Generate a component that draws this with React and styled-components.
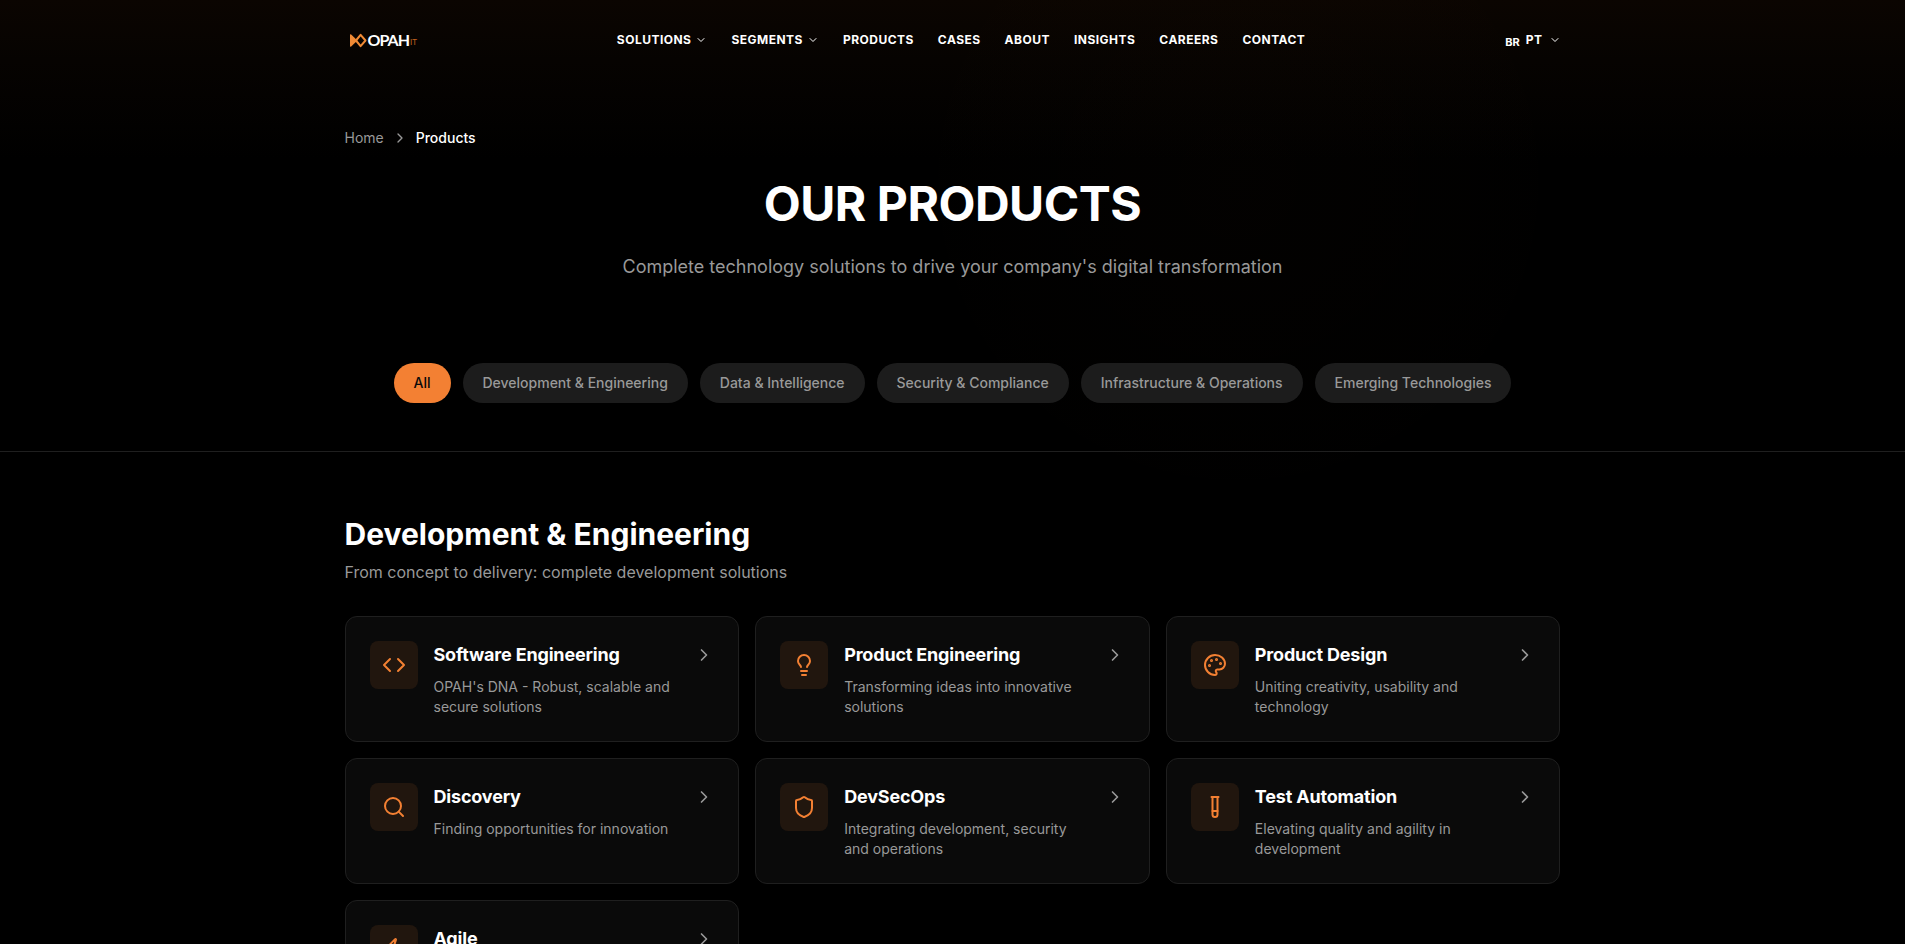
import React, { useState } from 'react';
import styled, { createGlobalStyle } from 'styled-components';
import { ChevronDown, ChevronRight, Code, Search, TestTube, Zap } from 'lucide-react';

const GlobalStyle = createGlobalStyle`
    * {
        box-sizing: border-box;
    }
    body {
        margin: 0;
        background: #000;
        color: #fff;
        font-family: Inter, sans-serif;
        -webkit-font-smoothing: antialiased;
    }
    h1, h2, h3, p, ul, ol {
        margin: 0;
        padding: 0;
    }
    ul, ol {
        list-style: none;
    }
    a {
        color: inherit;
        text-decoration: none;
    }
    button {
        border: 0;
        padding: 0;
        background: none;
        color: inherit;
        font: inherit;
        cursor: pointer;
    }
`

const Page = styled.div`
    min-height: 100vh;
    background:
        radial-gradient(circle at 65% 180px, rgba(243, 128, 51, 0.012), transparent 360px),
        linear-gradient(to bottom, #0b0501 0, #060301 60px, #000 160px);
`

const Inner = styled.div`
    max-width: 1280px;
    margin: 0 auto;
    padding: 0 32px;
`

const HeaderBar = styled(Inner)`
    display: flex;
    align-items: center;
    justify-content: space-between;
    height: 80px;
`

const Logo = styled.a`
    display: flex;
    align-items: center;
    gap: 1px;
    padding-left: 5px;
    font-family: Lato, sans-serif;
    font-size: 16px;
    font-weight: 700;
    line-height: 16px;
    letter-spacing: -1px;

    small {
        align-self: flex-end;
        font-size: 8px;
        font-weight: 400;
        line-height: 12px;
        letter-spacing: 0;
        color: #c4611f;
    }
`

const Nav = styled.nav`
    ul {
        display: flex;
        gap: 24px;
    }
    a, button {
        display: flex;
        align-items: center;
        gap: 4px;
        font-size: 12px;
        font-weight: 700;
        line-height: 16px;
        letter-spacing: 0.04em;
        text-transform: uppercase;
    }
`

const LangButton = styled.button`
    display: flex;
    align-items: center;
    gap: 6px;
    font-size: 12px;
    font-weight: 700;
    line-height: 16px;
    letter-spacing: 0.04em;

    .flag {
        padding-top: 4px;
        font-size: 11px;
        letter-spacing: 0;
    }
`

const Hero = styled.section`
    padding: 48px 0;
    border-bottom: 1px solid #1f1f1f;
`

const Breadcrumb = styled.ol`
    display: flex;
    align-items: center;
    gap: 8px;
    margin-bottom: 32px;
    font-size: 14px;
    line-height: 20px;
    color: #999;

    li {
        display: flex;
    }
    .current {
        font-weight: 500;
        color: #fff;
    }
`

const HeroText = styled.div`
    margin-bottom: 81px;
    text-align: center;

    h1 {
        margin-bottom: 24px;
        font-size: 48px;
        font-weight: 700;
        line-height: 48px;
        letter-spacing: -0.01em;
        text-transform: uppercase;
    }
    p {
        font-size: 18px;
        line-height: 30px;
        color: #999;
    }
`

const Filters = styled.div`
    display: flex;
    flex-wrap: wrap;
    justify-content: center;
    gap: 12px;
`

const Pill = styled.button`
    padding: 10px 20px;
    border-radius: 20px;
    background: ${({ $on }) => ($on ? '#f38033' : '#1c1c1c')};
    color: ${({ $on }) => ($on ? '#0a0a0a' : '#999')};
    font-size: 14px;
    font-weight: 500;
    line-height: 20px;
`

const Category = styled.section`
    padding: 64px 0;

    h2 {
        margin-bottom: 8px;
        font-size: 30px;
        font-weight: 700;
        line-height: 36px;
    }
    .lead {
        margin-bottom: 32px;
        font-size: 16px;
        line-height: 24px;
        color: #999;
    }
`

const CardGrid = styled.div`
    display: grid;
    grid-template-columns: repeat(3, 1fr);
    gap: 16px;

    @media (max-width: 1023px) {
        grid-template-columns: repeat(2, 1fr);
    }
    @media (max-width: 639px) {
        grid-template-columns: 1fr;
    }
`

const Card = styled.a`
    display: flex;
    align-items: flex-start;
    gap: 16px;
    padding: 24px;
    border: 1px solid #1f1f1f;
    border-radius: 12px;
    background: #0a0a0a;

    .arrow {
        flex: none;
        margin-top: 4px;
        color: #999;
    }
`

const IconBox = styled.div`
    display: flex;
    align-items: center;
    justify-content: center;
    flex: none;
    width: 48px;
    height: 48px;
    border-radius: 8px;
    background: #21160e;
    color: #f38033;
`

const CardText = styled.div`
    flex: 1;
    min-width: 0;

    h3 {
        margin-bottom: 8px;
        font-size: 18px;
        font-weight: 700;
        line-height: 28px;
        letter-spacing: -0.01em;
    }
    p {
        font-size: 14px;
        line-height: 20px;
        color: #999;
    }
`

const Stroke = ({ children }) => (
    <svg width="24" height="24" viewBox="0 0 24 24" fill="none" stroke="currentColor"
        strokeWidth="2" strokeLinecap="round" strokeLinejoin="round" aria-hidden="true">
        {children}
    </svg>
)

const Bulb = () => (
    <Stroke>
        <path d="M15 14c.2-1 .7-1.7 1.5-2.5 1-.9 1.5-2.2 1.5-3.5A6 6 0 0 0 6 8c0 1 .2 2.2 1.5 3.5.7.7 1.3 1.5 1.5 2.5" />
        <path d="M9 18h6" />
        <path d="M10 22h4" />
    </Stroke>
)

const ShieldIcon = () => (
    <Stroke>
        <path d="M20 13c0 5-3.5 7.5-7.66 8.95a1 1 0 0 1-.67-.01C7.5 20.5 4 18 4 13V6a1 1 0 0 1 1-1c2 0 4.5-1.2 6.24-2.72a1.17 1.17 0 0 1 1.52 0C14.51 3.81 17 5 19 5a1 1 0 0 1 1 1z" />
    </Stroke>
)

const PaletteIcon = () => (
    <Stroke>
        <circle cx="13.5" cy="6.5" r=".5" fill="currentColor" />
        <circle cx="17.5" cy="10.5" r=".5" fill="currentColor" />
        <circle cx="8.5" cy="7.5" r=".5" fill="currentColor" />
        <circle cx="6.5" cy="12.5" r=".5" fill="currentColor" />
        <path d="M12 2C6.5 2 2 6.5 2 12s4.5 10 10 10c.926 0 1.648-.746 1.648-1.688 0-.437-.18-.835-.437-1.125-.29-.289-.438-.652-.438-1.125a1.64 1.64 0 0 1 1.668-1.668h1.996c3.051 0 5.555-2.503 5.555-5.554C21.965 6.012 17.461 2 12 2z" />
    </Stroke>
)

const LogoMark = () => (
    <svg width="17" height="15" viewBox="0 0 17 15" fill="none" stroke="#f08a35" strokeWidth="2" aria-hidden="true">
        <path d="M0 2Q0 .6 1.2 1.6L7.4 7.5 1.2 13.4Q0 14.4 0 13z" fill="#f08a35" stroke="none" />
        <path d="M6 7.5 10.6 1.8 15.5 7.5 10.6 13.2z" strokeLinejoin="round" />
    </svg>
)

const menu = [
    { name: 'Solutions', sub: true },
    { name: 'Segments', sub: true },
    { name: 'Products' },
    { name: 'Cases' },
    { name: 'About' },
    { name: 'Insights' },
    { name: 'Careers' },
    { name: 'Contact' },
]

const filters = [
    'All',
    'Development & Engineering',
    'Data & Intelligence',
    'Security & Compliance',
    'Infrastructure & Operations',
    'Emerging Technologies',
]

const products = [
    { icon: Code, tit: 'Software Engineering', des: "OPAH's DNA - Robust, scalable and secure solutions" },
    { icon: Bulb, tit: 'Product Engineering', des: 'Transforming ideas into innovative solutions' },
    { icon: PaletteIcon, tit: 'Product Design', des: 'Uniting creativity, usability and technology' },
    { icon: Search, tit: 'Discovery', des: 'Finding opportunities for innovation' },
    { icon: ShieldIcon, tit: 'DevSecOps', des: 'Integrating development, security and operations' },
    { icon: TestTube, tit: 'Test Automation', des: 'Elevating quality and agility in development' },
    { icon: Zap, tit: 'Agile', des: '' },
]

const Header = () => (
    <header>
        <HeaderBar>
            <Logo href="#">
                <LogoMark />
                <span>OPAH</span>
                <small>IT</small>
            </Logo>
            <Nav>
                <ul>
                    {
                        menu.map(it => (
                            <li key={it.name}>
                                {it.sub
                                    ? <button type="button">{it.name} <ChevronDown size={12} /></button>
                                    : <a href="#">{it.name}</a>}
                            </li>
                        ))
                    }
                </ul>
            </Nav>
            <LangButton type="button">
                <span className="flag">BR</span>
                <span>PT</span>
                <ChevronDown size={12} />
            </LangButton>
        </HeaderBar>
    </header>
)

const App = () => {
    const [filter, setFilter] = useState('All');

    return (
        <Page>
            <GlobalStyle />
            <Header />
            <main>
                <Hero>
                    <Inner>
                        <nav aria-label="Breadcrumb">
                            <Breadcrumb>
                                <li><a href="#">Home</a></li>
                                <li><ChevronRight size={16} /></li>
                                <li className="current">Products</li>
                            </Breadcrumb>
                        </nav>
                        <HeroText>
                            <h1>Our Products</h1>
                            <p>Complete technology solutions to drive your company's digital transformation</p>
                        </HeroText>
                        <Filters>
                            {
                                filters.map(f => (
                                    <Pill type="button" key={f} $on={filter === f} onClick={() => setFilter(f)}>{f}</Pill>
                                ))
                            }
                        </Filters>
                    </Inner>
                </Hero>
                <Category>
                    <Inner>
                        <h2>Development & Engineering</h2>
                        <p className="lead">From concept to delivery: complete development solutions</p>
                        <CardGrid>
                            {
                                products.map(({ icon: Icon, tit, des }) => (
                                    <Card href="#" key={tit}>
                                        <IconBox><Icon /></IconBox>
                                        <CardText>
                                            <h3>{tit}</h3>
                                            {des && <p>{des}</p>}
                                        </CardText>
                                        <ChevronRight className="arrow" size={20} />
                                    </Card>
                                ))
                            }
                        </CardGrid>
                    </Inner>
                </Category>
            </main>
        </Page>
    )
}

export default App
